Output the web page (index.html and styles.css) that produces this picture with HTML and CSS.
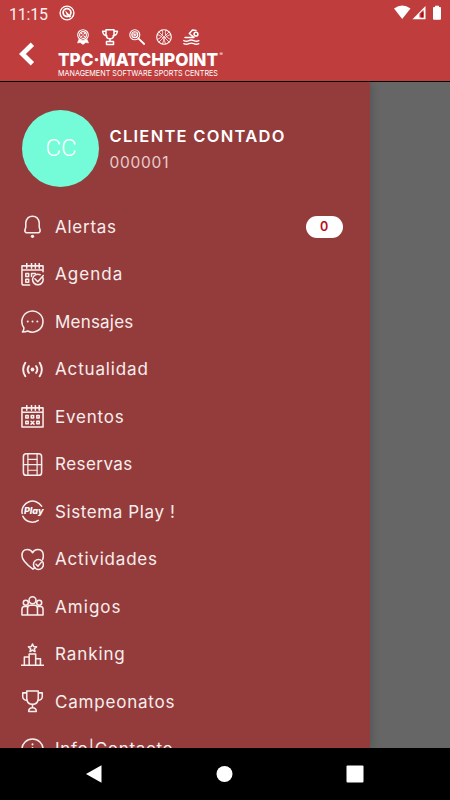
FILE: index.html
```html
<!DOCTYPE html>
<html lang="es">
<head>
<meta charset="utf-8">
<title>TPC Matchpoint</title>
<link rel="stylesheet" href="styles.css">
</head>
<body>
<header class="top">
  <div class="status">
    <span class="clock">11:15</span>
    <svg class="app-dot" width="16" height="16" viewBox="0 0 16 16"><circle cx="8" cy="8" r="6.9" fill="none" stroke="#fff" stroke-width="1.4"/><circle cx="8" cy="7.6" r="3.9" fill="none" stroke="#fff" stroke-width="1.8"/><path d="M6 5.200l6.200 6.200-1.500 1.300-3.100-3.200z" fill="#fff"/></svg>
    <svg class="signals" width="50" height="16" viewBox="0 0 50 16" fill="#fff"><path d="M0 3.500Q8.200-2.500 16.500 3.500L8.200 14z"/><path d="M18.500 14.300L31.500 1v13.300z"/><path d="M25.500 12.600V8.700l4-4v7.900z" fill="#c03d3d"/><path d="M27.300 8.500l2.200-2v6h-2.200z" fill="#a90b0b"/><path d="M39 3q0-1 1-1h1V.8h4V2h1q1 0 1 1v10.700q0 1-1 1h-6q-1 0-1-1z"/></svg>
  </div>
  <div class="brandbar">
    <svg class="back" width="16" height="24" viewBox="0 0 16 24"><path d="M13.400 2.200L3.400 12l10 9.700" fill="none" stroke="#fff" stroke-width="4.800"/></svg>
    <svg class="logo" width="168" height="50" viewBox="0 0 168 50" fill="#fff">
      <g fill="none" stroke="#fff" stroke-width="1.100" stroke-linecap="round" stroke-linejoin="round">
        <g transform="translate(19 1)"><circle cx="6" cy="6" r="5.300"/><circle cx="6" cy="6" r="3.400"/><path d="M4.500 4.500h.1M7.500 4.500h.1M6 6h.1M4.500 7.500h.1M7.500 7.500h.1" stroke-width="1.600"/><path d="M1.800 10.500l-1.300 3.500 2.700-.5L6 15.600l2.800-2.100 2.700.5-1.300-3.500L6 12z" fill="#fff" stroke-width=".5"/></g>
        <g transform="translate(44 1)"><path d="M4 .8h8v5q-.5 4-4 4t-4-4zM4 2.300H.6Q1 6.500 5 7M12 2.300h3.400Q15 6.500 11 7M8 10v2M4.500 15.400v-3h7v3z" stroke-width="1.500"/></g>
        <g transform="translate(71 1)"><circle cx="5.800" cy="5.800" r="5"/><circle cx="5.800" cy="5.800" r="3"/><path d="M5.800 3v5.600M3 5.800h5.600M4 4l3.600 3.600M7.600 4L4 7.600" stroke-width=".7"/><path d="M9.600 9.600l5.600 5.400" stroke-width="1.800"/></g>
        <g transform="translate(98 1)"><circle cx="8" cy="8" r="7.300"/><path d="M3 3l10 10M13 3L3 13M6 1q3 6-4.500 9.500M10 1q-3 6 4.500 9.500M1.500 5.500Q8 7 9.500 15M14.500 5.500Q8 7 6.500 15" stroke-width=".8"/></g>
        <g transform="translate(125 1)"><circle cx="13" cy="5.200" r="1.900" stroke-width="1.500"/><path d="M2 8.600h9L6.300 4.500 9.500 1l3.500.6" stroke-width="1.500"/><path d="M.8 11.600q2.600 1.200 5 0t5 0 5 0M.8 14.700q2.600 1.200 5 0t5 0 5 0" stroke-width="1.400"/></g>
      </g>
      <text class="wordmark" x="0" y="37.500" textLength="160" lengthAdjust="spacingAndGlyphs">TPC·MATCHPOINT</text>
      <text class="reg" x="161.500" y="27.800">®</text>
      <text class="tagline" x="0" y="48.300" textLength="160" lengthAdjust="spacingAndGlyphs">MANAGEMENT SOFTWARE SPORTS CENTRES</text>
    </svg>
  </div>
</header>
<main class="stage">
  <aside class="drawer">
    <section class="profile">
      <div class="avatar"><span>CC</span></div>
      <div class="who"><div class="name">CLIENTE CONTADO</div><div class="code">000001</div></div>
    </section>
    <nav class="menu">
      <a class="item"><svg viewBox="0 0 24 24"><path d="M5.500 18.500q-2-.8-1.300-3L5 12.500V8Q6 1.200 12 1.200T19 8v4.500l.8 3q.7 2.200-1.300 3z"/><circle class="fill" cx="12" cy="22.200" r="1.700"/></svg><span class="s-alertas">Alertas</span><b class="badge">0</b></a>
      <a class="item"><svg viewBox="0 0 24 24"><path d="M9 23H3Q1 23 1 21V3h22v6M1 7.300h22M6 .5v5M11 .5v5M15 .5v5M19 .5v5M5 11h3v3H5zM5 17h3v3H5zM11 14v-3h4"/><path d="M22.700 15.200A5.500 5.500 0 1 1 20 12.300M14.500 16.500l3 3 5.800-6.500"/></svg><span class="s-agenda">Agenda</span></a>
      <a class="item"><svg viewBox="0 0 24 24"><path d="M3 18.500A11 11 0 1 1 7 21.900Q5 23 1.500 23q1.700-2 1.500-4.500z"/><path d="M7 12h.1M12 12h.1M17 12h.1" stroke-width="2"/></svg><span class="s-mensajes">Mensajes</span></a>
      <a class="item"><svg viewBox="0 0 24 24"><circle class="fill" cx="12" cy="12" r="2"/><path d="M8.200 8.500q-2.500 3.500 0 7M15.800 8.500q2.500 3.500 0 7M4.500 5q-4.500 7 0 14M19.500 5q4.500 7 0 14" stroke-width="2"/></svg><span class="s-actualidad">Actualidad</span></a>
      <a class="item"><svg viewBox="0 0 24 24"><path d="M1 3h22v20H1zM1 7.500h22M6 .5v5M11 .5v5M15 .5v5M19 .5v5M5 11h2.500v2.500H5zM10.700 11h2.500v2.500h-2.500zM16.500 11H19v2.500h-2.500zM5 17h2.500v2.500H5zM16.500 17H19v2.500h-2.500zM10.500 17l3 3M13.500 17l-3 3"/></svg><span class="s-eventos">Eventos</span></a>
      <a class="item"><svg viewBox="0 0 24 24"><rect x="2.500" y=".8" width="19" height="22.500" rx="3"/><path d="M7.200 1v22.500M16.800 1v22.500M2.500 12.200h19M7 6.700h10M7 18h10" stroke-width="1.300"/></svg><span class="s-reservas">Reservas</span></a>
      <a class="item"><svg viewBox="0 0 24 24"><path d="M1.200 14A11 11 0 0 1 21.500 6.500M2 17A11 11 0 0 0 18 21.200"/><text class="play" x="3" y="15" textLength="20.500" lengthAdjust="spacingAndGlyphs">Play</text></svg><span class="s-play">Sistema Play !</span></a>
      <a class="item"><svg viewBox="0 0 24 24"><path d="M12.500 22Q1 13.500 1 8 1 1.600 6.800 1.600 10.500 1.600 12 5q1.800-3.400 5.300-3.400 6 0 6 6.500 0 2-.7 4M12.500 22l2-1.500"/><circle cx="18.200" cy="17.200" r="5.200"/><path d="M15.700 17l2 2 3.400-4"/></svg><span class="s-actividades">Actividades</span></a>
      <a class="item"><svg viewBox="0 0 24 24"><circle cx="12" cy="5.500" r="3.600"/><circle cx="5" cy="8" r="2.600"/><circle cx="19" cy="8" r="2.600"/><path d="M6.800 20.800V14q0-3.300 3-3.300h4.400q3 0 3 3.300v6.800zM6.800 20.800H1V15q0-3 2.500-3h3.300M17.200 20.800H23V15q0-3-2.500-3h-3.300"/></svg><span class="s-amigos">Amigos</span></a>
      <a class="item"><svg viewBox="0 0 24 24"><path d="M.5 23.200h23M3.500 23v-8.500h5M8.500 23V11.500h6.800V23M15.300 16.500h5V23M12 1l1.200 2.700 3 .3-2.300 2 .7 2.900L12 7.400 9.400 8.900l.7-2.900-2.300-2 3-.3z"/></svg><span class="s-ranking">Ranking</span></a>
      <a class="item"><svg viewBox="0 0 24 24"><path d="M6 1h12v8q-.5 6-6 6T6 9zM6 3H1.800v4Q2 10.500 6.500 10.800M18 3h4.200v4q-.2 3.500-4.700 3.800M12 15v3.500M8 22.500q0-4 4-4t4 4z"/></svg><span class="s-campeonatos">Campeonatos</span></a>
      <a class="item"><svg viewBox="0 0 24 24"><circle cx="12" cy="12" r="11"/><path d="M12 10.500V18M12 6.500v.3" stroke-width="2"/></svg><span class="s-info">Info|Contacto</span></a>
    </nav>
  </aside>
</main>
<footer class="navbar">
  <svg width="18" height="20" viewBox="0 0 18 20"><path d="M1 10L16.500 1.300v17.400z"/></svg>
  <svg width="18" height="20" viewBox="0 0 18 20"><circle cx="9.500" cy="10" r="8"/></svg>
  <svg width="18" height="20" viewBox="0 0 18 20"><rect x=".5" y="1.500" width="17" height="17" rx="1"/></svg>
</footer>
</body>
</html>
```

FILE: styles.css
```css
* { box-sizing: border-box; }
body { margin: 0; width: 450px; height: 800px; overflow: hidden; display: flex; flex-direction: column; background: #000; color: #fff; font-family: Inter, "Liberation Sans", sans-serif; }
svg { display: block; flex: none; }

.top { height: 82px; flex: none; background: #c03d3d; border-bottom: 1px solid #000; }
.status { height: 28px; display: flex; align-items: flex-start; padding: 5px 8px 0 9px; }
.clock { font: 400 16px/19px Roboto, sans-serif; width: 39px; letter-spacing: -.2px; opacity: .93; white-space: nowrap; }
.app-dot { margin-left: 11px; }
.signals { margin-left: auto; margin-right: -2px; }
.brandbar { display: flex; align-items: flex-start; padding-left: 18.500px; }
.back { margin-top: 13.500px; }
.logo { margin-left: 23.500px; overflow: visible; }
.wordmark { font-weight: 800; font-size: 18px; }
.reg { font-size: 5px; }
.tagline { font-size: 8.200px; font-weight: 400; }

.stage { flex: 1; min-height: 0; overflow: hidden; background: #666; }
.drawer { width: 369.500px; height: 100%; overflow: hidden; background: #943c3c; box-shadow: 0 0 10px rgba(0, 0, 0, .25); }
.profile { height: 120.750px; display: flex; align-items: flex-start; padding: 27.500px 0 0 21.500px; }
.avatar { width: 77px; height: 77px; flex: none; border-radius: 50%; background: #74fbd7; display: flex; align-items: center; justify-content: center; font: 300 24px/28px Roboto, sans-serif; padding-left: 2px; }
.who { margin: 14px 0 0 11px; white-space: nowrap; }
.name { font-size: 16.500px; font-weight: 600; line-height: 24px; letter-spacing: 1.270px; }
.code { font-size: 15.500px; line-height: 29px; color: #e8cccc; letter-spacing: .75px; }

.item { display: flex; align-items: center; height: 47.500px; padding: 0 27px 0 21px; color: #f8eeee; font-size: 17px; line-height: 24px; white-space: nowrap; }
.item svg { width: 23px; height: 23px; margin-right: 11px; fill: none; stroke: #f8eeee; stroke-width: 1.600; stroke-linecap: round; stroke-linejoin: round; }
.item svg .fill { fill: #f8eeee; stroke: none; }
.item .play { fill: #fff; stroke: none; font: italic 800 9.500px Inter, sans-serif; }
.item span { letter-spacing: .6px; }
.item .s-alertas { letter-spacing: .75px; }
.item .s-agenda { letter-spacing: 1.050px; }
.item .s-mensajes { letter-spacing: .2px; }
.item .s-actualidad { letter-spacing: .850px; }
.item .s-eventos { letter-spacing: .8px; }
.item .s-reservas { letter-spacing: .45px; }
.item .s-actividades { letter-spacing: .8px; }
.item .s-amigos { letter-spacing: 1.050px; }
.item .s-ranking { letter-spacing: .9px; }
.item .s-campeonatos { letter-spacing: .8px; }
.item .s-info { letter-spacing: .7px; }
.badge { margin-left: auto; width: 37px; height: 22px; border-radius: 11px; background: #fff; color: #b80f17; font-size: 12.500px; font-weight: 600; line-height: 22px; text-align: center; }

.navbar { height: 52px; flex: none; display: flex; justify-content: space-between; align-items: center; padding: 0 86.500px 0 85px; }
.navbar svg { fill: #fff; }
```
